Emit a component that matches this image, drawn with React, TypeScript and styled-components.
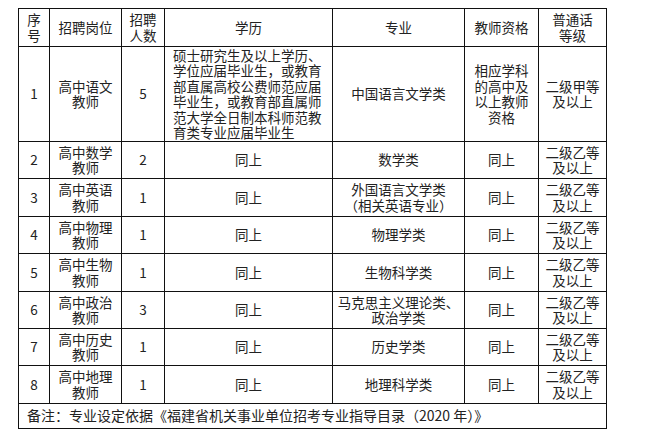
import React from 'react';
import styled, { createGlobalStyle } from 'styled-components';

const GlobalStyle = createGlobalStyle`
    html, body {
        margin: 0;
        padding: 0;
        background: #ffffff;
    }
    body {
        font-family: "Noto Sans CJK SC", "Noto Sans", sans-serif;
        color: #222222;
    }
`;

const Page = styled.div`
    padding: 8px 0 0 18px;
`;

const Table = styled.table`
    border-collapse: collapse;
    table-layout: fixed;
    width: 588px;
    font-size: 13.5px;
    line-height: 15.5px;
    border: 1px solid #111111;
`;

const HeadRow = styled.tr`
    height: 38px;
`;

const Row = styled.tr<{ $h: number }>`
    height: ${(p) => p.$h}px;
`;

const Cell = styled.td<{ $align?: string }>`
    border: 1px solid #111111;
    padding: 0 3px;
    text-align: ${(p) => p.$align || 'center'};
    vertical-align: middle;
    overflow: hidden;
    word-break: break-all;
    box-sizing: border-box;
`;

const HeadCell = styled(Cell).attrs({ as: 'th' })`
    font-weight: normal;
`;

const WideText = styled(Cell)`
    text-align: left;
    padding: 0 6px 0 8px;
`;

const Note = styled(Cell)`
    text-align: left;
    padding: 0 8px;
    height: 25px;
    font-size: 14px;
`;

const cols = [31, 72, 43, 168, 132, 74, 68];

type Job = {
    no: string;
    post: string[];
    count: string;
    major: string[];
};

const jobs: Job[] = [
    { no: '2', post: ['高中数学', '教师'], count: '2', major: ['数学类'] },
    { no: '3', post: ['高中英语', '教师'], count: '1', major: ['外国语言文学类', '（相关英语专业）'] },
    { no: '4', post: ['高中物理', '教师'], count: '1', major: ['物理学类'] },
    { no: '5', post: ['高中生物', '教师'], count: '1', major: ['生物科学类'] },
    { no: '6', post: ['高中政治', '教师'], count: '3', major: ['马克思主义理论类、', '政治学类'] },
    { no: '7', post: ['高中历史', '教师'], count: '1', major: ['历史学类'] },
    { no: '8', post: ['高中地理', '教师'], count: '1', major: ['地理科学类'] },
];

const heights = [37, 38, 37, 38, 37, 37, 38];

const Lines: React.FC<{ lines: string[] }> = ({ lines }) => (
    <>
        {lines.map((l, i) => (
            <React.Fragment key={i}>
                {i > 0 && <br />}
                {l}
            </React.Fragment>
        ))}
    </>
);

const App: React.FC = () => {
    return (
        <>
            <GlobalStyle />
            <Page>
                <Table>
                    <colgroup>
                        {cols.map((w, i) => (
                            <col key={i} style={{ width: w }} />
                        ))}
                    </colgroup>
                    <tbody>
                        <HeadRow>
                            <HeadCell><Lines lines={['序', '号']} /></HeadCell>
                            <HeadCell>招聘岗位</HeadCell>
                            <HeadCell><Lines lines={['招聘', '人数']} /></HeadCell>
                            <HeadCell>学历</HeadCell>
                            <HeadCell>专业</HeadCell>
                            <HeadCell>教师资格</HeadCell>
                            <HeadCell><Lines lines={['普通话', '等级']} /></HeadCell>
                        </HeadRow>
                        <Row $h={95}>
                            <Cell>1</Cell>
                            <Cell><Lines lines={['高中语文', '教师']} /></Cell>
                            <Cell>5</Cell>
                            <WideText>
                                <Lines
                                    lines={[
                                        '硕士研究生及以上学历、',
                                        '学位应届毕业生，或教育',
                                        '部直属高校公费师范应届',
                                        '毕业生，或教育部直属师',
                                        '范大学全日制本科师范教',
                                        '育类专业应届毕业生',
                                    ]}
                                />
                            </WideText>
                            <Cell>中国语言文学类</Cell>
                            <Cell><Lines lines={['相应学科', '的高中及', '以上教师', '资格']} /></Cell>
                            <Cell><Lines lines={['二级甲等', '及以上']} /></Cell>
                        </Row>
                        {jobs.map((j, i) => (
                            <Row key={j.no} $h={heights[i]}>
                                <Cell>{j.no}</Cell>
                                <Cell><Lines lines={j.post} /></Cell>
                                <Cell>{j.count}</Cell>
                                <Cell>同上</Cell>
                                <Cell><Lines lines={j.major} /></Cell>
                                <Cell>同上</Cell>
                                <Cell><Lines lines={['二级乙等', '及以上']} /></Cell>
                            </Row>
                        ))}
                        <tr>
                            <Note colSpan={7}>备注：专业设定依据《福建省机关事业单位招考专业指导目录（2020 年）》</Note>
                        </tr>
                    </tbody>
                </Table>
            </Page>
        </>
    );
};

export default App;
